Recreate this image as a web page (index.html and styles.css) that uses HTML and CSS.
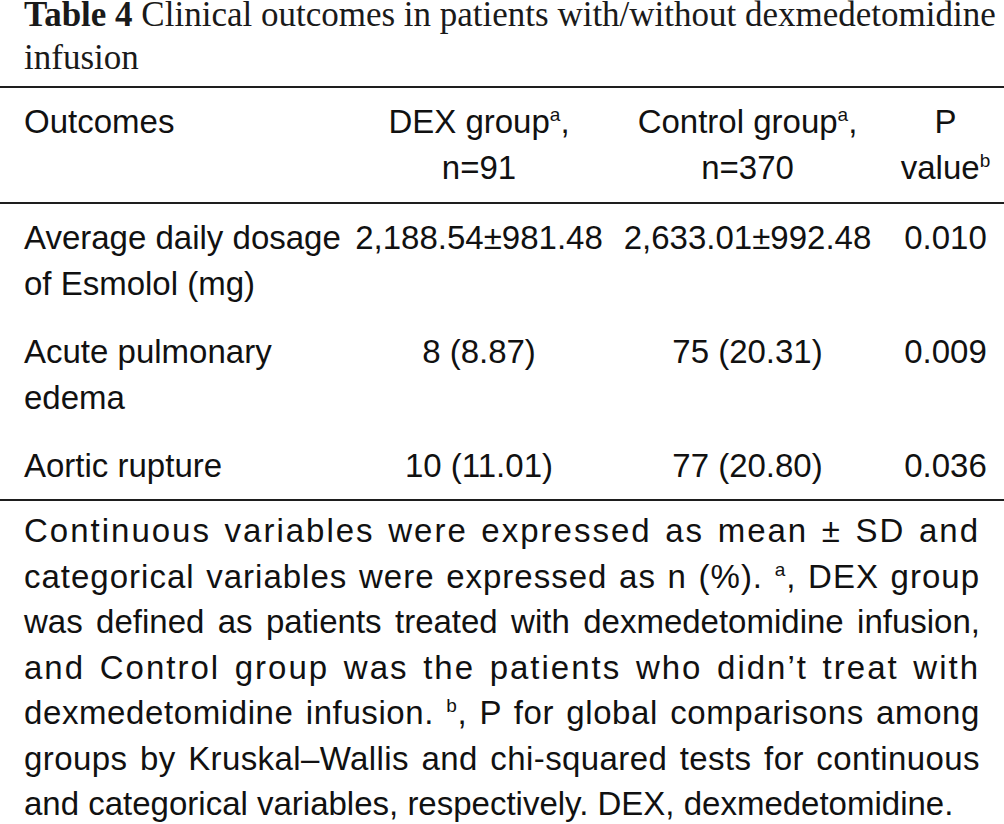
FILE: index.html
```html
<!DOCTYPE html>
<html lang="en">
<head>
<meta charset="utf-8">
<title>Table 4</title>
<link rel="stylesheet" href="styles.css">
</head>
<body>
<div class="page">
  <div class="caption">
    <span class="caption-line first"><span class="caption-label">Table 4</span> Clinical outcomes in patients with/without dexmedetomidine</span>
    <span class="caption-line second">infusion</span>
  </div>
  <table class="outcomes">
    <colgroup>
      <col class="c1"><col class="c2"><col class="c3"><col class="c4">
    </colgroup>
    <thead>
      <tr>
        <th class="left">Outcomes</th>
        <th>DEX group<span class="sup">a</span>,<br>n=91</th>
        <th>Control group<span class="sup">a</span>,<br>n=370</th>
        <th>P<br>value<span class="sup">b</span></th>
      </tr>
    </thead>
    <tbody>
      <tr>
        <td class="left">Average daily dosage of Esmolol (mg)</td>
        <td>2,188.54±981.48</td>
        <td>2,633.01±992.48</td>
        <td>0.010</td>
      </tr>
      <tr>
        <td class="left">Acute pulmonary<br>edema</td>
        <td>8 (8.87)</td>
        <td>75 (20.31)</td>
        <td>0.009</td>
      </tr>
      <tr>
        <td class="left">Aortic rupture</td>
        <td>10 (11.01)</td>
        <td>77 (20.80)</td>
        <td>0.036</td>
      </tr>
    </tbody>
  </table>
  <div class="notes">
    <span class="line l1">Continuous variables were expressed as mean ± SD and</span>
    <span class="line l2">categorical variables were expressed as n (%). <span class="sup">a</span>, DEX group</span>
    <span class="line l3">was defined as patients treated with dexmedetomidine infusion,</span>
    <span class="line l4">and Control group was the patients who didn’t treat with</span>
    <span class="line l5">dexmedetomidine infusion. <span class="sup">b</span>, P for global comparisons among</span>
    <span class="line l6">groups by Kruskal–Wallis and chi-squared tests for continuous</span>
    <span class="line last">and categorical variables, respectively. DEX, dexmedetomidine.</span>
  </div>
</div>
</body>
</html>
```

FILE: styles.css
```css
html, body {
  margin: 0;
  padding: 0;
  background: #ffffff;
}

.page {
  width: 1004px;
  color: #111111;
}

.caption {
  font-family: "Liberation Serif", "Times New Roman", serif;
  font-size: 35px;
  padding-left: 24px;
  color: #1a1a1a;
}

.caption-line {
  display: block;
  white-space: nowrap;
}

.caption-line.first {
  line-height: 30px;
}

.caption-line.second {
  line-height: 56px;
}

.caption-label {
  font-weight: bold;
}

.outcomes {
  width: 1004px;
  border-collapse: collapse;
  table-layout: fixed;
  font-family: "Liberation Sans", Arial, sans-serif;
  font-size: 33px;
  line-height: 46px;
  color: #111111;
  border-top: 2px solid #1e1e1e;
  border-bottom: 2px solid #1e1e1e;
}

.c1 { width: 350px; }
.c2 { width: 258px; }
.c3 { width: 279px; }
.c4 { width: 117px; }

.outcomes th {
  font-weight: normal;
  text-align: center;
  vertical-align: top;
  padding: 11px 0 11px 0;
  border-bottom: 2px solid #1e1e1e;
}

.outcomes td {
  text-align: center;
  vertical-align: top;
  padding: 11px 0 11px 0;
  white-space: nowrap;
}

.outcomes .left {
  text-align: left;
  padding-left: 24px;
  white-space: normal;
}

.outcomes tbody tr:last-child td {
  padding-bottom: 10px;
}

.sup {
  font-size: 19px;
  line-height: 0;
  vertical-align: 12px;
}

.notes {
  font-family: "Liberation Sans", Arial, sans-serif;
  font-size: 33px;
  line-height: 45.5px;
  color: #111111;
  padding: 7px 24px 0 24px;
}

.notes .line {
  display: block;
  white-space: nowrap;
  text-align: justify;
  text-align-last: justify;
}

.notes .l1 { letter-spacing: 2px; }
.notes .l2 { letter-spacing: 1px; }
.notes .l3 { letter-spacing: 0; }
.notes .l4 { letter-spacing: 2px; }
.notes .l5 { letter-spacing: 0.6px; }
.notes .l6 { letter-spacing: 0.4px; }

.notes .line.last {
  text-align: left;
  text-align-last: left;
}
```
